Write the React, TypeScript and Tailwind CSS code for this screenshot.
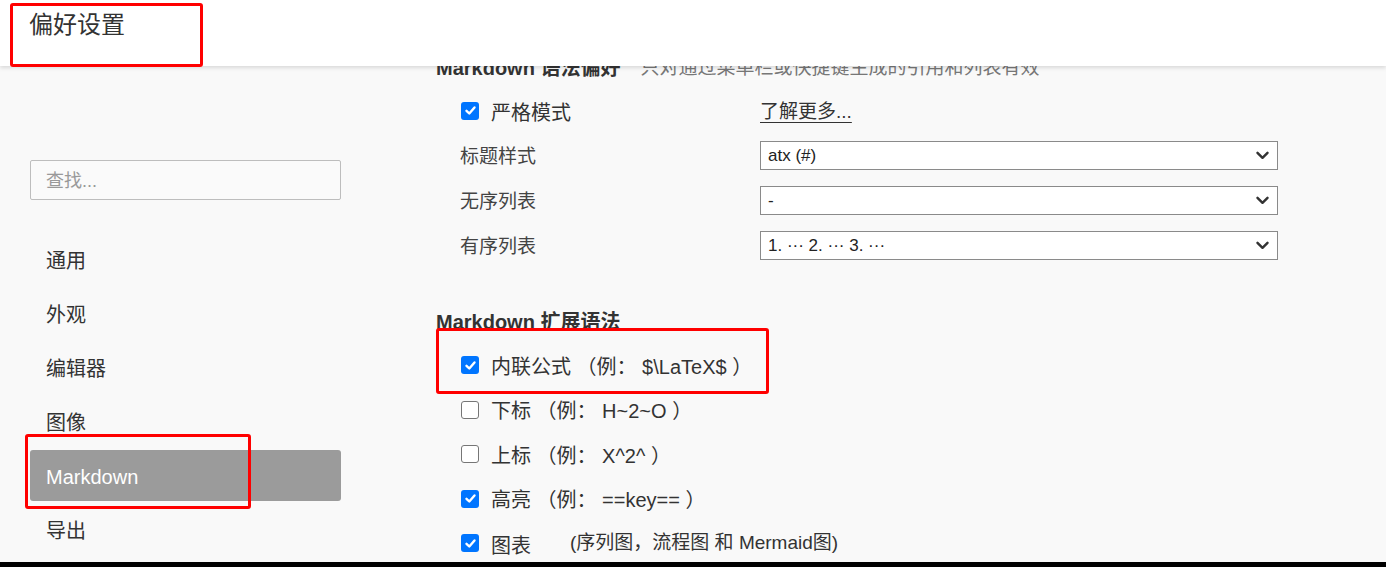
import React from "react";

function CheckBox({ checked }: { checked: boolean }) {
  if (checked) {
    return (
      <span className="w-[18px] h-[18px] rounded-[3px] bg-[#0075ff] flex items-center justify-center shrink-0">
        <svg width="13" height="13" viewBox="0 0 13 13">
          <polyline points="2.5,6.8 5.3,9.5 10.5,3.5" fill="none" stroke="white" strokeWidth="2.4" strokeLinecap="round" strokeLinejoin="round" />
        </svg>
      </span>
    );
  }
  return <span className="w-[18px] h-[18px] rounded-[3px] border-[1.5px] border-[#767676] bg-white shrink-0" />;
}

function Select({ value }: { value: string }) {
  return (
    <div className="w-[518px] h-[29px] bg-white border border-[#8a8a8a] flex items-center justify-between pl-[7px] pr-[8px] text-[17px] text-[#222]">
      <span>{value}</span>
      <svg width="13" height="9" viewBox="0 0 13 9">
        <polyline points="1.5,1.8 6.5,6.8 11.5,1.8" fill="none" stroke="#333" strokeWidth="2.4" strokeLinecap="round" strokeLinejoin="round" />
      </svg>
    </div>
  );
}

const navItems = ["通用", "外观", "编辑器", "图像", "Markdown", "导出"];

export default function App() {
  return (
    <div className="w-[1386px] h-[567px] flex flex-col overflow-hidden bg-[#f9f9f9] text-[#333] font-['Liberation_Sans','Noto_Sans_CJK_SC',sans-serif]">
      <header className="relative z-10 h-[66px] shrink-0 bg-white shadow-[0_2px_4px_rgba(0,0,0,0.13)]">
        <div className="pl-[29px] pt-[9px] text-[24px] leading-[32px] text-[#333]">偏好设置</div>
        <div className="absolute left-[10px] top-[3px] w-[193px] h-[64px] border-[3px] border-[#ff0000] rounded-[3px]" />
      </header>
      <div className="flex-1 flex min-h-0">
        <aside className="w-[371px] shrink-0 pl-[30px] pr-[30px] pt-[94px]">
          <div className="h-[40px] border border-[#bdbdbd] rounded-[2px] bg-[#fafafa] flex items-center pl-[15px] pt-[3px] text-[18px] text-[#999]">
            查找...
          </div>
          <nav className="mt-[33.5px] flex flex-col gap-[3px]">
            {navItems.map((item) => {
              const active = item === "Markdown";
              return (
                <div
                  key={item}
                  className={
                    active
                      ? "relative h-[51px] rounded-[3px] bg-[#9b9b9b] text-white flex items-center pl-[16px] pt-[3px] text-[20px]"
                      : "relative h-[51px] rounded-[3px] text-[#333] flex items-center pl-[16px] pt-[3px] text-[20px]"
                  }
                >
                  {item}
                  {active && (
                    <div className="absolute left-[-5px] top-[-16px] w-[226px] h-[75px] border-[3px] border-[#ff0000] rounded-[3px]" />
                  )}
                </div>
              );
            })}
          </nav>
        </aside>
        <main className="flex-1 pl-[65px] overflow-hidden">
          <div className="-mt-[15px] h-[34px] flex items-center">
            <span className="text-[20px] font-bold text-[#333]">Markdown 语法偏好</span>
            <span className="ml-[20px] text-[19px] text-[#777]">只对通过菜单栏或快捷键生成的引用和列表有效</span>
          </div>
          <div className="mt-[3px] grid grid-cols-[324px_518px]">
            <div className="h-[45px] flex items-center pl-[25px]">
              <CheckBox checked />
              <span className="ml-[12px] pt-[4px] text-[20px]">严格模式</span>
            </div>
            <div className="h-[45px] flex items-center">
              <span className="pt-[4px] text-[19px] underline underline-offset-[4px] text-[#333]">了解更多...</span>
            </div>
            {[
              ["标题样式", "atx (#)"],
              ["无序列表", "-"],
              ["有序列表", "1. ··· 2. ··· 3. ···"],
            ].map(([label, value]) => (
              <React.Fragment key={label}>
                <div className="h-[45px] flex items-center pl-[24px] pt-[3px] text-[19px] text-[#444]">{label}</div>
                <div className="h-[45px] flex items-center">
                  <Select value={value} />
                </div>
              </React.Fragment>
            ))}
          </div>
          <div className="mt-[36px] h-[34px] flex items-center pt-[2px]">
            <span className="text-[20px] font-bold text-[#333]">Markdown 扩展语法</span>
          </div>
          <div className="pt-[5px] flex flex-col">
            <div className="relative h-[44.5px] flex items-center pl-[25px]">
              <CheckBox checked />
              <span className="ml-[12px] pt-[3px] text-[20px]">内联公式 （例： $\LaTeX$ ）</span>
              <div className="absolute left-0 top-[-15px] w-[333px] h-[66px] border-[3px] border-[#ff0000] rounded-[3px]" />
            </div>
            <div className="h-[44.5px] flex items-center pl-[25px]">
              <CheckBox checked={false} />
              <span className="ml-[12px] pt-[3px] text-[20px]">下标 （例： H~2~O ）</span>
            </div>
            <div className="h-[44.5px] flex items-center pl-[25px]">
              <CheckBox checked={false} />
              <span className="ml-[12px] pt-[3px] text-[20px]">上标 （例： X^2^ ）</span>
            </div>
            <div className="h-[44.5px] flex items-center pl-[25px]">
              <CheckBox checked />
              <span className="ml-[12px] pt-[3px] text-[20px]">高亮 （例： ==key== ）</span>
            </div>
            <div className="h-[44.5px] flex items-center pl-[25px]">
              <CheckBox checked />
              <span className="ml-[12px] pt-[6px] text-[20px]">图表</span>
              <span className="ml-[39px] text-[19px]">(序列图，流程图 和 Mermaid图)</span>
            </div>
          </div>
        </main>
      </div>
      <div className="h-[5px] shrink-0 bg-black" />
    </div>
  );
}
